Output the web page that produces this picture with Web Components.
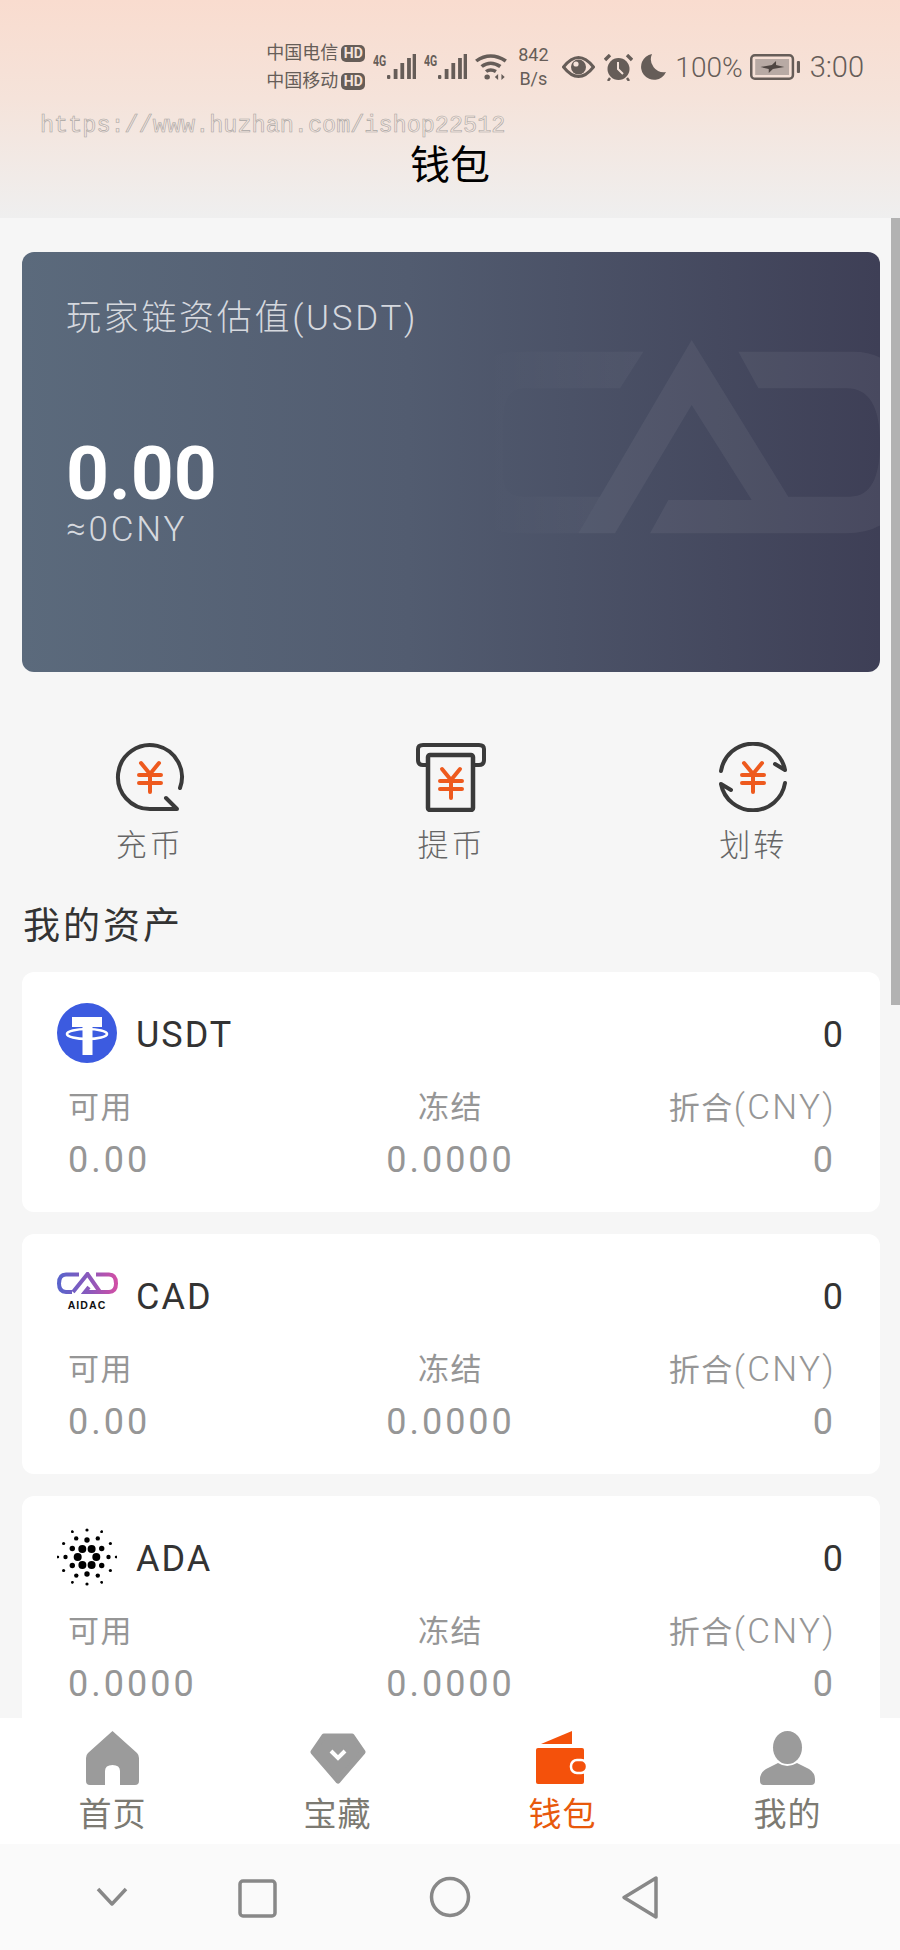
<!DOCTYPE html>
<html lang="zh">
<head>
<meta charset="utf-8">
<title>钱包</title>
<style>
  html, body { margin: 0; padding: 0; }
  body {
    width: 900px;
    height: 1950px;
    overflow: hidden;
    background: #f6f6f6;
    font-family: Roboto, "Noto Sans CJK SC", sans-serif;
    position: relative;
  }
  .page { display: flex; flex-direction: column; height: 1950px; }
  .content { flex: 1; min-height: 0; overflow: hidden; padding: 34px 20px 0 22px; }
  .actions { display: grid; grid-template-columns: repeat(3, 1fr); margin: 70px -24px 0 -23px; }
  .assets { display: flex; flex-direction: column; gap: 22px; }
  .tabs { display: grid; grid-template-columns: repeat(4, 225px); height: 126px; background: #fff; position: relative; }
  .bar { position: absolute; right: 0; top: 218px; width: 9px; height: 787px; background: #b2b2b2; }
</style>
</head>
<body>
<div class="page">
  <wallet-header title-text="钱包"></wallet-header>
  <div class="content">
    <balance-card label="玩家链资估值(USDT)" amount="0.00" cny="≈0CNY"></balance-card>
    <div class="actions">
      <action-item label="充币" icon="deposit"></action-item>
      <action-item label="提币" icon="withdraw"></action-item>
      <action-item label="划转" icon="transfer"></action-item>
    </div>
    <section-title>我的资产</section-title>
    <div class="assets">
      <asset-card name="USDT" total="0" avail="0.00" frozen="0.0000" cny="0">
        <svg slot="icon" width="60" height="60" viewBox="0 0 60 60">
          <circle cx="30" cy="30" r="30" fill="#3c5be0"/>
          <path d="M15 14H45V24H35.500V52H25.500V24H15Z" fill="#fff"/>
          <ellipse cx="30" cy="31" rx="20" ry="5" fill="none" stroke="#fff" stroke-width="2.600"/>
        </svg>
      </asset-card>
      <asset-card name="CAD" total="0" avail="0.00" frozen="0.0000" cny="0">
        <cad-logo slot="icon"></cad-logo>
      </asset-card>
      <asset-card name="ADA" total="0" avail="0.0000" frozen="0.0000" cny="0">
        <ada-logo slot="icon"></ada-logo>
      </asset-card>
    </div>
  </div>
  <div class="tabs">
    <tab-item label="首页">
      <svg width="53" height="54" viewBox="0 0 53 54"><path d="M26.500 0 L51 22 Q53 24 53 27 V50 Q53 54 49 54 H34 V40 Q34 34 26.500 34 Q19 34 19 40 V54 H4 Q0 54 0 50 V27 Q0 24 2 22 Z" fill="#9b9b9b"/></svg>
    </tab-item>
    <tab-item label="宝藏">
      <svg width="56" height="54" viewBox="0 0 56 54"><path d="M14 5 H42 L53 21 L28 50 L3 21 Z" fill="#9b9b9b" stroke="#9b9b9b" stroke-width="5" stroke-linejoin="round"/><path d="M21 20 L28 27 L35 20" fill="none" stroke="#fff" stroke-width="4"/></svg>
    </tab-item>
    <tab-item label="钱包" active>
      <svg width="54" height="54" viewBox="0 0 54 54"><path d="M5 13 L36 0 V13 Z" fill="#f4510b"/><rect x="0" y="17" width="48" height="36" rx="2" fill="#f4510b"/><rect x="35" y="29" width="16" height="13" rx="6" fill="#f4510b" stroke="#fff" stroke-width="2.500"/></svg>
    </tab-item>
    <tab-item label="我的">
      <svg width="55" height="54" viewBox="0 0 55 54"><ellipse cx="27.500" cy="16.500" rx="14.500" ry="16.500" fill="#9b9b9b"/><path d="M0 48 Q0 42 6 38 L18 32 Q27 38 37 32 L49 38 Q55 42 55 48 V50 Q55 54 51 54 H4 Q0 54 0 50 Z" fill="#9b9b9b"/></svg>
    </tab-item>
  </div>
  <nav-bar></nav-bar>
</div>
<div class="bar"></div>

<script>
const yen = (x, y, w = 22) => {
  const h = 30, r = x + w, m = x + w / 2;
  return `<path d="M${x + 2} ${y + 1}L${m} ${y + 12}L${r - 2} ${y + 1}M${x} ${y + 13}H${r}M${x} ${y + 21}H${r}M${m} ${y + 12}V${y + h}" fill="none" stroke="#ee5a1e" stroke-width="4" stroke-linecap="round" stroke-linejoin="round"/>`;
};

const BARS = `<svg width="29" height="26" viewBox="0 0 26 26" preserveAspectRatio="none" fill="#665d58"><rect x="0" y="21" width="3" height="4" rx="1"/><rect x="6" y="15" width="3.400" height="10"/><rect x="12" y="9" width="3.400" height="16"/><rect x="18" y="4" width="3.400" height="21"/><rect x="23" y="0" width="3" height="25"/></svg>`;

class StatusBar extends HTMLElement {
  constructor() {
    super();
    this.attachShadow({ mode: 'open' }).innerHTML = `
    <style>
      :host { display: flex; align-items: center; justify-content: flex-end; height: 50px; padding-right: 36px; color: #665d58; font-family: Roboto, "Noto Sans CJK SC", sans-serif; }
      svg { display: block; flex: none; }
      .carrier { display: flex; flex-direction: column; gap: 8px; font-size: 18px; line-height: 20px; margin-right: 8px; }
      .carrier div { display: flex; align-items: center; gap: 3px; white-space: nowrap; }
      .hd { background: #665d58; color: #f5e3da; font-size: 14px; font-weight: 700; line-height: 17px; height: 17px; padding: 0 2.500px; border-radius: 5px; }
      .sig { display: flex; align-items: flex-start; margin-right: 8px; }
      .g { font-size: 14px; font-weight: 700; line-height: 14px; width: 14px; transform: scaleX(.75); transform-origin: left; }
      .speed { font-size: 18px; line-height: 24px; text-align: center; margin: 0 13px 0 9px; width: 32px; }
      .pct { font-size: 28px; font-weight: 300; margin: 0 7px 0 9px; }
      .time { font-size: 29px; font-weight: 300; margin-left: 10px; }
    </style>
    <div class="carrier">
      <div>中国电信<span class="hd">HD</span></div>
      <div>中国移动<span class="hd">HD</span></div>
    </div>
    <div class="sig"><span class="g">4G</span>${BARS}</div>
    <div class="sig" style="margin-right:7px"><span class="g">4G</span>${BARS}</div>
    <svg width="34" height="28" viewBox="0 0 31 28" preserveAspectRatio="none" fill="none" stroke="#665d58" stroke-width="3.400"><path d="M2 8 Q15 -2 29 8"/><path d="M7 13.500 Q15 7 24 13.500"/><path d="M11 18.500 Q15 15.500 20 18.500"/><circle cx="12" cy="24" r="2.500" fill="#665d58" stroke="none"/><path d="M22 21 L19 24 L22 27Z M25 21 L28 24 L25 27Z" fill="#665d58" stroke="none"/></svg>
    <div class="speed">842<br>B/s</div>
    <svg width="33" height="22" viewBox="0 0 33 22" style="margin-right:9px"><path d="M1.500 11 Q16.500 -8 31.500 11 Q16.500 30 1.500 11Z" fill="none" stroke="#665d58" stroke-width="3"/><circle cx="16.500" cy="11" r="7.500" fill="#665d58"/><circle cx="14" cy="8" r="2.600" fill="#f5e3da"/></svg>
    <svg width="29" height="27" viewBox="0 0 29 27" style="margin-right:8px"><circle cx="14.500" cy="15" r="11" fill="#665d58"/><path d="M14 8 V15 L19 20" fill="none" stroke="#f5e3da" stroke-width="2"/><path d="M1 6 L6 1 M28 6 L23 1" stroke="#665d58" stroke-width="3.400"/><path d="M6 24 L4 27 M23 24 L25 27" stroke="#665d58" stroke-width="2.400"/></svg>
    <svg width="25" height="26" viewBox="0 0 25 26"><path d="M11 0 A13 13 0 1 0 25 18 A13 13 0 0 1 11 0Z" fill="#665d58"/></svg>
    <span class="pct">100%</span>
    <svg width="50" height="26" viewBox="0 0 48 26" preserveAspectRatio="none"><rect x="1.200" y="1.200" width="40" height="23.600" rx="3.500" fill="none" stroke="#665d58" stroke-width="2.400"/><rect x="5" y="5" width="32.500" height="16" fill="#b8aaa4"/><path d="M10 13 L21 11 L25 7 L25 11 L33 13 L22 15 L18 19 L18 15Z" fill="#4f4642"/><rect x="45" y="7" width="3" height="12" rx="1" fill="#665d58"/></svg>
    <span class="time">3:00</span>
    `;
  }
}
customElements.define('status-bar', StatusBar);

class WalletHeader extends HTMLElement {
  constructor() {
    super();
    this.attachShadow({ mode: 'open' }).innerHTML = `
    <style>
      :host { display: block; position: relative; height: 218px; padding-top: 42px; box-sizing: border-box; background: linear-gradient(180deg, #f9dccf 0%, #f5e3da 45%, #efefef 100%); }
      .mark { position: absolute; left: 40px; top: 113px; font: 23.500px/26px "Liberation Mono", monospace; color: transparent; -webkit-text-stroke: .6px #a9a5a3; white-space: nowrap; }
      h1 { margin: 48px 0 0; font: 400 40px/44px "Noto Sans CJK SC", sans-serif; color: #000; text-align: center; }
    </style>
    <status-bar></status-bar>
    <h1></h1>
    <div class="mark">https://www.huzhan.com/ishop22512</div>
    `;
    this.shadowRoot.querySelector('h1').textContent = this.getAttribute('title-text');
  }
}
customElements.define('wallet-header', WalletHeader);

class BalanceCard extends HTMLElement {
  constructor() {
    super();
    this.attachShadow({ mode: 'open' }).innerHTML = `
    <style>
      :host { display: block; position: relative; overflow: hidden; box-sizing: border-box; height: 420px; padding: 44px 44px 0; border-radius: 12px; color: #fff; background: linear-gradient(90deg, #5b6a7c 0%, #525c70 45%, #3e3f56 100%); font-family: Roboto, "Noto Sans CJK SC", sans-serif; }
      .label { font-size: 35px; line-height: 46px; letter-spacing: 2.700px; font-weight: 300; color: #d5d8de; white-space: nowrap; }
      .amount { font-size: 75px; line-height: 76px; font-weight: 700; margin-top: 93px; }
      .cny { font-size: 35px; line-height: 40px; font-weight: 300; letter-spacing: 2.800px; color: #d5d8de; margin-top: -1px; }
      svg { position: absolute; left: 458px; top: 68px; }
    </style>
    <svg width="420" height="240" viewBox="0 0 1260 720">
      <defs><linearGradient id="fade" x1="0" x2="1"><stop offset="0.1" stop-color="#fff" stop-opacity="0"/><stop offset=".5" stop-color="#fff" stop-opacity=".02"/><stop offset="1" stop-color="#fff" stop-opacity=".04"/></linearGradient></defs>
      <path d="M490 95L420 205H130Q70 205 70 300V470Q70 530 130 530H360L295 640H110Q-40 640 -40 470V270Q-40 95 110 95Z" fill="url(#fade)"/>
      <path d="M775 95H1120Q1300 95 1300 370Q1300 640 1100 640H510L565 540H815L635 255L405 640H295L635 60L925 530H1110Q1200 530 1200 370Q1200 205 1100 205H835Z" fill="#fff" fill-opacity=".055"/>
    </svg>
    <div class="label"></div>
    <div class="amount"></div>
    <div class="cny"></div>
    `;
    for (const k of ['label', 'amount', 'cny']) {
      this.shadowRoot.querySelector('.' + k).textContent = this.getAttribute(k);
    }
  }
}
customElements.define('balance-card', BalanceCard);

const ACTION_ICONS = {
  deposit: `<path d="M65 46A32 32 0 1 0 35 67H62L51 56" fill="none" stroke="#3a3a3a" stroke-width="4" stroke-linecap="round" stroke-linejoin="round"/>` + yen(24, 20),
  withdraw: `<path d="M11 23H7Q2 23 2 18V7Q2 3 7 3H63Q68 3 68 7V18Q68 23 63 23H58" fill="none" stroke="#3a3a3a" stroke-width="4" stroke-linecap="round"/><rect x="12" y="13" width="45" height="55" rx="2" fill="none" stroke="#3a3a3a" stroke-width="4.500"/>` + yen(24, 26),
  transfer: `<g fill="none" stroke="#3a3a3a" stroke-width="4" stroke-linecap="round" stroke-linejoin="round"><path d="M3 29A32.500 32.500 0 0 1 67 28L57 22"/><path d="M67 41A32.500 32.500 0 0 1 3 42L13 48"/></g>` + yen(24, 20)
};

class ActionItem extends HTMLElement {
  constructor() {
    super();
    this.attachShadow({ mode: 'open' }).innerHTML = `
    <style>
      :host { display: flex; flex-direction: column; align-items: center; font-family: Roboto, "Noto Sans CJK SC", sans-serif; }
      svg { display: block; }
      span { font-size: 31px; line-height: 44px; letter-spacing: 3px; margin-top: 12px; color: #666; font-weight: 300; }
    </style>
    <svg width="70" height="70" viewBox="0 0 70 70">${ACTION_ICONS[this.getAttribute('icon')]}</svg>
    <span>${this.getAttribute('label')}</span>
    `;
  }
}
customElements.define('action-item', ActionItem);

class SectionTitle extends HTMLElement {
  constructor() {
    super();
    this.attachShadow({ mode: 'open' }).innerHTML = `
    <style>
      :host { display: block; margin: 32px 0 26px 1px; font: 400 37px/46px "Noto Sans CJK SC", sans-serif; letter-spacing: 3px; color: #333; }
    </style>
    <slot></slot>
    `;
  }
}
customElements.define('section-title', SectionTitle);

class AssetCard extends HTMLElement {
  constructor() {
    super();
    const a = (k) => this.getAttribute(k);
    this.attachShadow({ mode: 'open' }).innerHTML = `
    <style>
      :host { display: block; box-sizing: border-box; height: 240px; padding: 30px 37px 0 35px; background: #fff; border-radius: 12px; font-family: Roboto, "Noto Sans CJK SC", sans-serif; flex: none; }
      .head { display: flex; align-items: center; height: 62px; font-size: 36px; letter-spacing: 2px; color: #333; }
      .icon { width: 60px; height: 60px; margin-right: 19px; flex: none; }
      .name { flex: 1; margin-top: 4px; }
      .total { letter-spacing: 0; margin-top: 4px; }
      .stats { display: grid; grid-template-columns: 1fr 1fr 1fr; row-gap: 6px; padding: 0 10px 0 11px; margin-top: 25px; color: #969696; }
      .stats div:nth-child(3n+2) { text-align: center; }
      .stats div:nth-child(3n) { text-align: right; }
      .k { font-size: 31px; line-height: 38px; letter-spacing: 1.500px; white-space: nowrap; }
      .k i { font-style: normal; font-size: 35px; letter-spacing: 2.300px; font-weight: 300; }
      .v { font-size: 36px; line-height: 52px; letter-spacing: 3px; }
      .stats div:nth-child(3n).k, .stats div:nth-child(3n).v { margin-right: -3px; }
      ::slotted(svg) { display: block; }
    </style>
    <div class="head">
      <div class="icon"><slot name="icon"></slot></div>
      <span class="name">${a('name')}</span>
      <span class="total">${a('total')}</span>
    </div>
    <div class="stats">
      <div class="k">可用</div><div class="k">冻结</div><div class="k">折合<i>(CNY)</i></div>
      <div class="v">${a('avail')}</div><div class="v">${a('frozen')}</div><div class="v">${a('cny')}</div>
    </div>
    `;
  }
}
customElements.define('asset-card', AssetCard);

class CadLogo extends HTMLElement {
  constructor() {
    super();
    this.attachShadow({ mode: 'open' }).innerHTML = `
    <style>
      :host { display: flex; flex-direction: column; align-items: center; width: 60px; height: 60px; font-family: "Liberation Sans", sans-serif; }
      svg { display: block; margin-top: 7px; }
      span { font-size: 10.500px; line-height: 12px; font-weight: 700; letter-spacing: 1.100px; color: #111; margin-top: 4px; }
    </style>
    <svg width="61" height="23" viewBox="0 0 61 23">
      <defs><linearGradient id="cad" x1="0" x2="1"><stop offset="0" stop-color="#5a63cb"/><stop offset=".55" stop-color="#8d58bb"/><stop offset="1" stop-color="#cf4fa6"/></linearGradient></defs>
      <path d="M22 2.500H9Q2 2.500 2 11.500Q2 20 9 20H15M39 2.500H52Q59 2.500 59 11.500Q59 20 52 20H28L32 15M16 20L30.500 2L43 20" fill="none" stroke="url(#cad)" stroke-width="4"/>
    </svg>
    <span>AIDAC</span>
    `;
  }
}
customElements.define('cad-logo', CadLogo);

class AdaLogo extends HTMLElement {
  constructor() {
    super();
    // rings of dots around the centre: radius, start angle, dot size
    const rings = [[9.3, 0, 4], [17, 30, 2.7], [21.5, 0, 2.2], [27, 30, 1.6], [29, 0, 1.2], [29.5, 60, 1.2]];
    let dots = '';
    for (const [r, start, size] of rings) {
      for (let i = 0; i < 6; i++) {
        const t = (start + i * 60) * Math.PI / 180;
        dots += `<circle cx="${(30 + r * Math.cos(t)).toFixed(1)}" cy="${(30 + r * Math.sin(t)).toFixed(1)}" r="${size}"/>`;
      }
    }
    this.attachShadow({ mode: 'open' }).innerHTML = `
    <style>:host { display: block; width: 60px; height: 60px; } svg { display: block; }</style>
    <svg width="60" height="60" viewBox="0 0 60 60" fill="#000">${dots}</svg>
    `;
  }
}
customElements.define('ada-logo', AdaLogo);

class TabItem extends HTMLElement {
  constructor() {
    super();
    const on = this.hasAttribute('active');
    this.attachShadow({ mode: 'open' }).innerHTML = `
    <style>
      :host { display: flex; flex-direction: column; align-items: center; padding-top: 13px; font-family: "Noto Sans CJK SC", sans-serif; }
      .i { height: 54px; }
      ::slotted(svg) { display: block; }
      span { font-size: 33px; line-height: 44px; margin-top: 5px; letter-spacing: 1px; color: ${on ? '#e8590c' : '#7c7a72'}; }
    </style>
    <div class="i"><slot></slot></div>
    <span>${this.getAttribute('label')}</span>
    `;
  }
}
customElements.define('tab-item', TabItem);

class NavBar extends HTMLElement {
  constructor() {
    super();
    this.attachShadow({ mode: 'open' }).innerHTML = `
    <style>
      :host { display: block; height: 106px; background: #fafafa; }
      svg { display: block; }
    </style>
    <svg width="900" height="106" viewBox="0 0 900 106" fill="none" stroke="#888" stroke-width="3.500" stroke-linejoin="round">
      <path d="M98 45L112 60L126 45"/>
      <rect x="240" y="37" width="35" height="35" rx="3"/>
      <circle cx="450" cy="53" r="18.500"/>
      <path d="M656 34V73L624 53.500Z"/>
    </svg>
    `;
  }
}
customElements.define('nav-bar', NavBar);
</script>
</body>
</html>
